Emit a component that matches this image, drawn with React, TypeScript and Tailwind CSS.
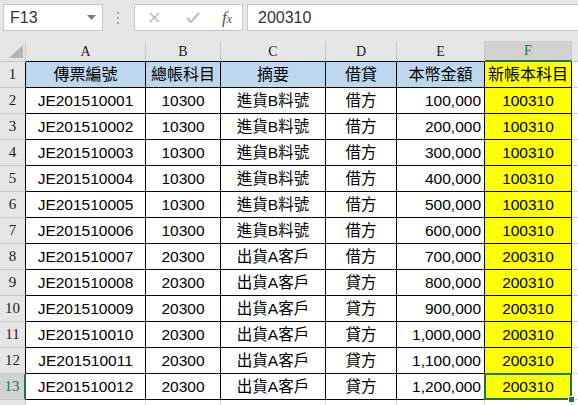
import React from "react";

const cellFont = { fontFamily: '"Liberation Sans", "Noto Sans CJK TC", sans-serif' };
const headFont = { fontFamily: '"Liberation Serif", "DejaVu Serif", serif' };

const cols = [
  { key: "A", w: "w-[120px]", align: "justify-center" },
  { key: "B", w: "w-[75px]", align: "justify-center" },
  { key: "C", w: "w-[105px]", align: "justify-center" },
  { key: "D", w: "w-[71px]", align: "justify-center" },
  { key: "E", w: "w-[88px]", align: "justify-end pr-[3px]" },
  { key: "F", w: "w-[87px]", align: "justify-center" },
];

const header = ["傳票編號", "總帳科目", "摘要", "借貸", "本幣金額", "新帳本科目"];

const amounts = [
  "100,000", "200,000", "300,000", "400,000", "500,000", "600,000",
  "700,000", "800,000", "900,000", "1,000,000", "1,100,000", "1,200,000",
];

const rows = amounts.map((amt, i) => {
  const buy = i < 6;
  return [
    `JE2015100${String(i + 1).padStart(2, "0")}`,
    buy ? "10300" : "20300",
    buy ? "進貨B料號" : "出貨A客戶",
    i < 7 ? "借方" : "貸方",
    amt,
    buy ? "100310" : "200310",
  ];
});

function FormulaBar() {
  return (
    <div className="flex h-[41px] items-start bg-[#e6e6e6] pt-[4px]">
      <div className="ml-[3px] flex h-[27px] w-[100px] items-center justify-between border border-[#c6c6c6] bg-white pl-[6px] pr-[6px]">
        <span className="text-[16px] text-[#333]" style={cellFont}>F13</span>
        <svg width="9" height="5" viewBox="0 0 9 5">
          <path d="M0 0h9L4.5 5z" fill="#7a7a7a" />
        </svg>
      </div>
      <div className="ml-[13px] flex h-[27px] w-[4px] flex-col items-center justify-center gap-[3px]">
        <span className="h-[2px] w-[2px] bg-[#a6a6a6]" />
        <span className="h-[2px] w-[2px] bg-[#a6a6a6]" />
        <span className="h-[2px] w-[2px] bg-[#a6a6a6]" />
      </div>
      <div className="ml-[14px] flex h-[27px] w-[109px] items-center border border-[#c6c6c6] bg-white">
        <svg className="ml-[14px]" width="11" height="11" viewBox="0 0 11 11">
          <path d="M1 1l9 9M10 1l-9 9" stroke="#b4b4b4" strokeWidth="1.4" />
        </svg>
        <svg className="ml-[26px]" width="14" height="11" viewBox="0 0 14 11">
          <path d="M1 6l4 4 8-9" stroke="#b4b4b4" strokeWidth="1.8" fill="none" />
        </svg>
        <span className="ml-[22px] text-[17px] italic text-[#555]" style={headFont}>
          f<span className="text-[12px]">x</span>
        </span>
      </div>
      <div className="ml-[4px] flex h-[27px] flex-1 items-center border border-r-0 border-[#c6c6c6] bg-white pl-[10px]">
        <span className="text-[16px] text-[#333]" style={cellFont}>200310</span>
      </div>
    </div>
  );
}

function ColumnHeader() {
  return (
    <div className="flex h-[21px]">
      <div className="relative w-[26px] shrink-0 border-r border-b border-[#c6c6c6] bg-[#e6e6e6]">
        <svg className="absolute left-0 top-0" width="26" height="21" viewBox="0 0 26 21">
          <path d="M23 4L9 17h14z" fill="#b4b4b4" />
        </svg>
      </div>
      {cols.map((c) =>
        c.key === "F" ? (
          <div
            key={c.key}
            className={`${c.w} flex shrink-0 items-center justify-center border-r border-r-[#c6c6c6] border-b-2 border-b-[#217346] bg-[#d2d2d2] text-[14px] text-[#217346]`}
            style={headFont}
          >
            {c.key}
          </div>
        ) : (
          <div
            key={c.key}
            className={`${c.w} flex shrink-0 items-center justify-center border-r border-b border-r-[#c6c6c6] border-b-black bg-[#e6e6e6] text-[14px] text-[#222]`}
            style={headFont}
          >
            {c.key}
          </div>
        )
      )}
      <div className="flex-1 border-b border-[#c6c6c6] bg-[#e6e6e6]" />
    </div>
  );
}

function RowHeader({ n, active }: { n: number; active?: boolean }) {
  return active ? (
    <div
      className="flex w-[26px] shrink-0 items-center justify-center border-r-2 border-b border-r-[#217346] border-b-[#c6c6c6] bg-[#d2d2d2] text-[15px] text-[#217346]"
      style={headFont}
    >
      {n}
    </div>
  ) : (
    <div
      className="flex w-[26px] shrink-0 items-center justify-center border-r border-b border-r-black border-b-[#c6c6c6] bg-[#e6e6e6] text-[15px] text-[#222]"
      style={headFont}
    >
      {n}
    </div>
  );
}

export default function App() {
  return (
    <div className="h-[405px] w-[578px] overflow-hidden bg-[#e6e6e6]">
      <FormulaBar />
      <ColumnHeader />

      <div className="flex h-[26px]">
        <RowHeader n={1} />
        {cols.map((c, i) => (
          <div
            key={c.key}
            className={`${c.w} flex shrink-0 items-center justify-center border-r border-b border-black text-[16px] text-black ${c.key === "F" ? "bg-[#ffff00]" : "bg-[#bdd7ee]"}`}
            style={cellFont}
          >
            {header[i]}
          </div>
        ))}
        <div className="flex-1 border-b border-[#d4d4d4] bg-white" />
      </div>

      {rows.map((r, ri) => (
        <div key={ri} className="flex h-[26px]">
          <RowHeader n={ri + 2} active={ri === 11} />
          {cols.map((c, ci) => (
            <div
              key={c.key}
              className={`${c.w} relative flex shrink-0 items-center ${c.align} border-r border-b border-black text-[15.5px] text-black ${c.key === "F" ? "bg-[#ffff00]" : "bg-white"}`}
              style={cellFont}
            >
              {r[ci]}
              {c.key === "F" && ri === 11 && (
                <>
                  <div className="absolute -left-[1px] -top-[1px] -right-[1px] -bottom-[1px] border-2 border-[#217346]" />
                  <div className="absolute -bottom-[4px] -right-[4px] h-[7px] w-[7px] border border-white bg-[#217346]" />
                </>
              )}
            </div>
          ))}
          <div className="flex-1 border-b border-[#d4d4d4] bg-white" />
        </div>
      ))}

      <div className="flex h-[26px]">
        <div className="w-[26px] shrink-0 border-r border-[#c6c6c6] bg-[#e6e6e6]" />
        {cols.map((c) => (
          <div key={c.key} className={`${c.w} shrink-0 border-r border-[#d4d4d4] bg-white`} />
        ))}
        <div className="flex-1 bg-white" />
      </div>
    </div>
  );
}
